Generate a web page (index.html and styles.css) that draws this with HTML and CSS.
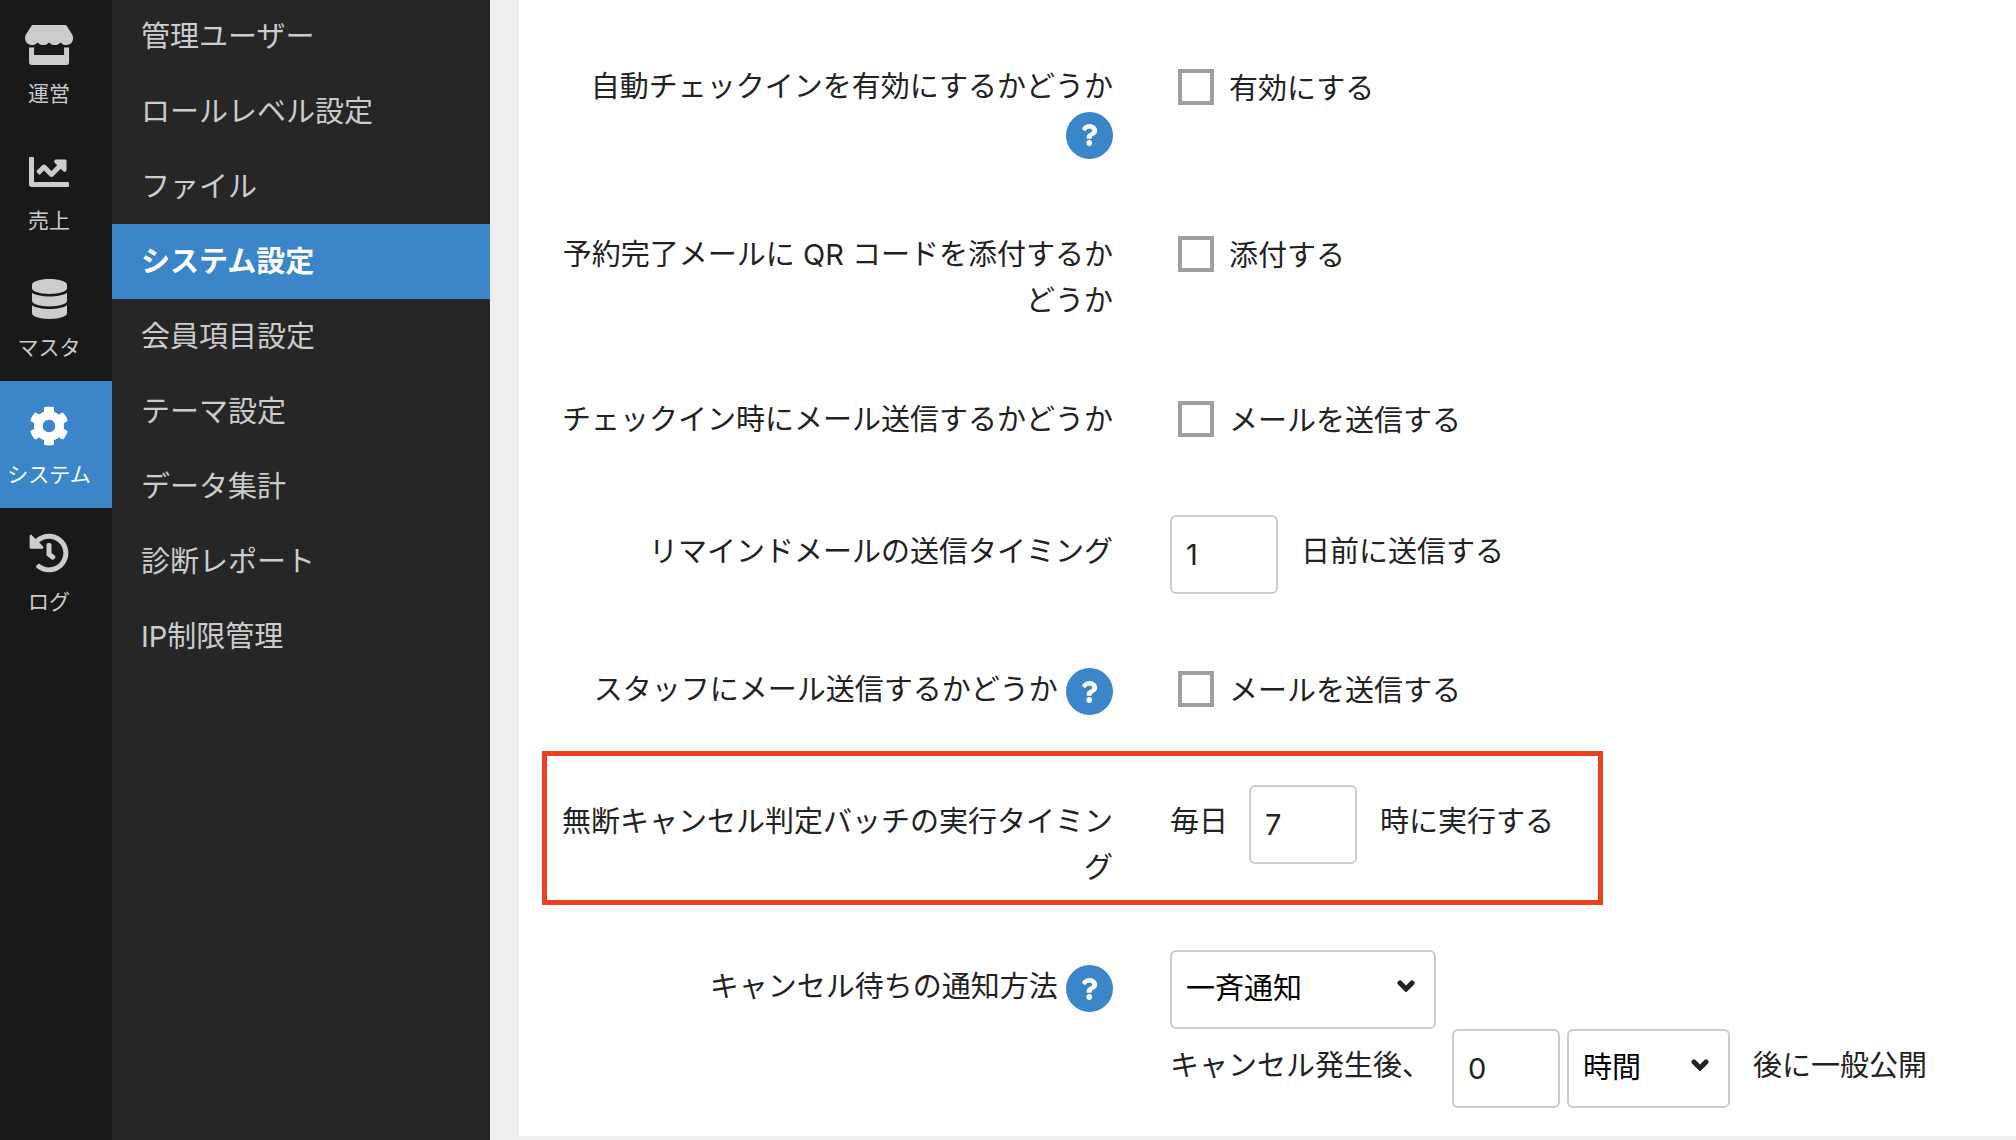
FILE: index.html
```html
<!DOCTYPE html>
<html lang="ja">
<head>
    <meta charset="UTF-8">
    <meta name="viewport" content="width=device-width, initial-scale=1.0">
    <title>システム設定</title>
    <link rel="stylesheet" href="styles.css">
</head>
<body>
    <div class="layout">
        <!-- Main navigation -->
        <nav class="rail" aria-label="メイン">
            <a class="rail-item" href="#">
                <svg class="rail-icon" viewBox="0 0 616 512" aria-hidden="true"><path d="M602 118.6L537.1 15C531.3 5.7 521 0 510 0H106C95 0 84.7 5.7 78.9 15L14 118.6c-33.5 53.5-3.8 127.9 58.8 136.4 4.5.6 9.1.9 13.7.9 29.6 0 55.8-13 73.8-33.1 18 20.1 44.3 33.1 73.8 33.1 29.6 0 55.8-13 73.8-33.1 18 20.1 44.3 33.1 73.8 33.1 29.6 0 55.8-13 73.8-33.1 18.1 20.1 44.3 33.1 73.8 33.1 4.7 0 9.2-.3 13.7-.9 62.8-8.4 92.6-82.8 59-136.4zM529.5 288c-10 0-19.9-1.5-29.5-3.8V384H116v-99.8c-9.6 2.2-19.5 3.8-29.5 3.8-6 0-12.1-.4-18-1.2-5.6-.8-11.1-2.1-16.4-3.6V480c0 17.7 14.3 32 32 32h448c17.7 0 32-14.3 32-32V283.2c-5.4 1.6-10.8 2.9-16.4 3.6-6.1.8-12.1 1.2-18.2 1.2z"/></svg>
                <span>運営</span>
            </a>
            <a class="rail-item" href="#">
                <svg class="rail-icon" viewBox="0 0 512 512" aria-hidden="true"><path d="M496 384H64V80c0-8.84-7.16-16-16-16H16C7.16 64 0 71.16 0 80v336c0 17.67 14.33 32 32 32h464c8.84 0 16-7.16 16-16v-32c0-8.84-7.16-16-16-16zM464 96H345.94c-21.38 0-32.09 25.85-16.97 40.97l32.4 32.4L288 242.75l-73.37-73.37c-12.5-12.5-32.76-12.5-45.25 0l-68.69 68.69c-6.25 6.25-6.25 16.38 0 22.63l22.62 22.62c6.25 6.25 16.38 6.25 22.63 0L192 237.25l73.37 73.37c12.5 12.5 32.76 12.5 45.25 0l96-96 32.4 32.4c15.12 15.12 40.97 4.41 40.97-16.97V112c.01-8.84-7.15-16-15.99-16z"/></svg>
                <span>売上</span>
            </a>
            <a class="rail-item" href="#">
                <svg class="rail-icon" viewBox="0 0 448 512" aria-hidden="true"><path d="M448 73.143v45.714C448 159.143 347.667 192 224 192S0 159.143 0 118.857V73.143C0 32.857 100.333 0 224 0s224 32.857 224 73.143zM448 176v102.857C448 319.143 347.667 352 224 352S0 319.143 0 278.857V176c48.125 33.143 136.208 48.572 224 48.572S399.874 209.143 448 176zm0 160v102.857C448 479.143 347.667 512 224 512S0 479.143 0 438.857V336c48.125 33.143 136.208 48.572 224 48.572S399.874 369.143 448 336z"/></svg>
                <span>マスタ</span>
            </a>
            <a class="rail-item active" href="#">
                <svg class="rail-icon" viewBox="0 0 512 512" aria-hidden="true"><path d="M487.4 315.7l-42.6-24.6c4.3-23.2 4.3-47 0-70.2l42.6-24.6c4.9-2.8 7.1-8.6 5.5-14-11.1-35.6-30-67.8-54.7-94.6-3.8-4.1-10-5.1-14.8-2.3L380.8 110c-17.9-15.4-38.5-27.3-60.8-35.1V25.8c0-5.6-3.9-10.5-9.4-11.7-36.7-8.2-74.3-7.8-109.2 0-5.5 1.2-9.4 6.1-9.4 11.7V75c-22.2 7.9-42.8 19.8-60.8 35.1L88.7 85.5c-4.9-2.8-11-1.9-14.8 2.3-24.7 26.7-43.6 58.9-54.7 94.6-1.7 5.4.6 11.2 5.5 14L67.3 221c-4.3 23.2-4.3 47 0 70.2l-42.6 24.6c-4.9 2.8-7.1 8.6-5.5 14 11.1 35.6 30 67.8 54.7 94.6 3.8 4.1 10 5.1 14.8 2.3l42.6-24.6c17.9 15.4 38.5 27.3 60.8 35.1v49.2c0 5.6 3.9 10.5 9.4 11.7 36.7 8.2 74.3 7.8 109.2 0 5.5-1.2 9.4-6.1 9.4-11.7v-49.2c22.2-7.9 42.8-19.8 60.8-35.1l42.6 24.6c4.9 2.8 11 1.9 14.8-2.3 24.7-26.7 43.6-58.9 54.7-94.6 1.5-5.5-.7-11.3-5.6-14.1zM256 336c-44.1 0-80-35.9-80-80s35.9-80 80-80 80 35.9 80 80-35.9 80-80 80z"/></svg>
                <span>システム</span>
            </a>
            <a class="rail-item" href="#">
                <svg class="rail-icon" viewBox="0 0 512 512" aria-hidden="true"><path d="M504 255.531c.253 136.64-111.18 248.372-247.82 248.468-59.015.042-113.223-20.53-155.822-54.911-11.077-8.94-11.905-25.541-1.839-35.607l11.267-11.267c8.609-8.609 22.353-9.551 31.891-1.984C173.062 425.135 212.781 440 256 440c101.705 0 184-82.311 184-184 0-101.705-82.311-184-184-184-48.814 0-93.149 18.969-126.068 49.932l50.754 50.754c10.08 10.08 2.941 27.314-11.313 27.314H24c-8.837 0-16-7.163-16-16V38.627c0-14.254 17.234-21.393 27.314-11.314l49.372 49.372C129.209 34.136 189.552 8 256 8c136.81 0 247.747 110.78 248 247.531zm-180.912 78.784l9.823-12.63c8.138-10.463 6.253-25.542-4.21-33.679L288 256.349V152c0-13.255-10.745-24-24-24h-16c-13.255 0-24 10.745-24 24v135.651l65.409 50.874c10.463 8.137 25.541 6.253 33.679-4.21z"/></svg>
                <span>ログ</span>
            </a>
        </nav>

        <!-- System menu -->
        <nav class="submenu" aria-label="システム">
            <a href="#">管理ユーザー</a>
            <a href="#">ロールレベル設定</a>
            <a href="#">ファイル</a>
            <a href="#" class="active">システム設定</a>
            <a href="#">会員項目設定</a>
            <a href="#">テーマ設定</a>
            <a href="#">データ集計</a>
            <a href="#">診断レポート</a>
            <a href="#">IP制限管理</a>
        </nav>

        <main class="content">
            <form class="card">
                <div class="form-row">
                    <div class="form-label">
                        <label for="auto-checkin">自動チェックインを有効にするかどうか</label>
                        <button type="button" class="help" aria-label="ヘルプ"><svg viewBox="0 0 384 512" aria-hidden="true"><use href="#question"/></svg></button>
                    </div>
                    <label class="check"><input type="checkbox" id="auto-checkin"><span>有効にする</span></label>
                </div>

                <div class="form-row">
                    <div class="form-label">
                        <label for="attach-qr">予約完了メールに QR コードを添付するかどうか</label>
                    </div>
                    <label class="check"><input type="checkbox" id="attach-qr"><span>添付する</span></label>
                </div>

                <div class="form-row">
                    <div class="form-label">
                        <label for="checkin-mail">チェックイン時にメール送信するかどうか</label>
                    </div>
                    <label class="check"><input type="checkbox" id="checkin-mail"><span>メールを送信する</span></label>
                </div>

                <div class="form-row">
                    <div class="form-label">
                        <label for="remind-days">リマインドメールの送信タイミング</label>
                    </div>
                    <div class="field">
                        <input type="text" inputmode="numeric" id="remind-days" value="1">
                        <span class="suffix">日前に送信する</span>
                    </div>
                </div>

                <div class="form-row">
                    <div class="form-label">
                        <label for="staff-mail">スタッフにメール送信するかどうか</label>
                        <button type="button" class="help" aria-label="ヘルプ"><svg viewBox="0 0 384 512" aria-hidden="true"><use href="#question"/></svg></button>
                    </div>
                    <label class="check"><input type="checkbox" id="staff-mail"><span>メールを送信する</span></label>
                </div>

                <div class="form-row highlight">
                    <div class="form-label">
                        <label for="batch-hour">無断キャンセル判定バッチの実行タイミング</label>
                    </div>
                    <div class="field">
                        <span class="prefix">毎日</span>
                        <input type="text" inputmode="numeric" id="batch-hour" value="7">
                        <span class="suffix">時に実行する</span>
                    </div>
                </div>

                <div class="form-row">
                    <div class="form-label">
                        <label for="notify-method">キャンセル待ちの通知方法</label>
                        <button type="button" class="help" aria-label="ヘルプ"><svg viewBox="0 0 384 512" aria-hidden="true"><use href="#question"/></svg></button>
                    </div>
                    <div>
                        <div class="field">
                            <div class="select wide">
                                <select id="notify-method">
                                    <option>一斉通知</option>
                                </select>
                                <svg viewBox="0 0 18 12" aria-hidden="true"><path d="M3 3l6 6 6-6"/></svg>
                            </div>
                        </div>
                        <div class="field">
                            <label class="prefix" for="open-after">キャンセル発生後、</label>
                            <input type="text" inputmode="numeric" id="open-after" value="0">
                            <div class="select unit">
                                <select aria-label="単位">
                                    <option>時間</option>
                                </select>
                                <svg viewBox="0 0 18 12" aria-hidden="true"><path d="M3 3l6 6 6-6"/></svg>
                            </div>
                            <span class="suffix">後に一般公開</span>
                        </div>
                    </div>
                </div>
            </form>
        </main>
    </div>

    <svg class="symbols" aria-hidden="true">
        <symbol id="question" viewBox="0 0 384 512"><path d="M202.021 0C122.202 0 70.503 32.703 29.914 91.026c-7.363 10.58-5.093 25.086 5.178 32.874l43.138 32.709c10.373 7.865 25.132 6.026 33.253-4.148 25.049-31.381 43.63-49.449 82.757-49.449 30.764 0 68.816 19.799 68.816 49.631 0 22.552-18.617 34.134-48.993 51.164-35.423 19.86-82.299 44.576-82.299 106.405V320c0 13.255 10.745 24 24 24h72.471c13.255 0 24-10.745 24-24v-5.773c0-42.86 125.268-44.645 125.268-160.627C377.504 66.256 286.902 0 202.021 0zM192 373.459c-38.196 0-69.271 31.075-69.271 69.271 0 38.195 31.075 69.27 69.271 69.27s69.271-31.075 69.271-69.27-31.075-69.271-69.271-69.271z"/></symbol>
    </svg>
</body>
</html>
```
FILE: styles.css
```css
*,
*::after {
    margin: 0;
    padding: 0;
    box-sizing: border-box;
}

body {
    font-family: Inter, "Noto Sans CJK JP", sans-serif;
    font-size: 29px;
    line-height: 46px;
    color: #222;
    background: #eee;
}

a {
    color: #ccc;
    text-decoration: none;
}

input,
select {
    font: inherit;
    color: inherit;
}

.layout {
    display: flex;
    align-items: stretch;
    min-height: 100vh;
}

/* Icon navigation */
.rail {
    flex: 0 0 112px;
    background: #191919;
}

.rail-item {
    display: flex;
    flex-direction: column;
    align-items: center;
    gap: 13px;
    height: 127px;
    padding: 25px 14px 0 0;
    font-size: 21px;
    line-height: 32px;
    white-space: nowrap;
}

.rail-icon {
    height: 40px;
    fill: currentColor;
}

.rail-item.active,
.submenu .active {
    color: #fff;
    background: #3b86c8;
}

/* Text navigation */
.submenu {
    flex: 0 0 378px;
    background: #262626;
}

.submenu a {
    display: block;
    height: 75px;
    padding: 1px 0 0 29px;
    line-height: 74px;
}

.submenu a:first-child {
    margin-top: -1px;
}

.submenu .active {
    font-weight: bold;
}

/* Settings form */
.content {
    flex: 1;
    min-width: 0;
    padding-left: 29px;
}

.card {
    padding: 50px 0 28px 30px;
    background: #fff;
}

.form-row {
    position: relative;
    display: grid;
    grid-template-columns: 2fr 3fr;
    column-gap: 57px;
    align-items: start;
    margin-bottom: 59px;
}

.form-row:last-child {
    margin-bottom: 0;
}

.form-label {
    padding-top: 14px;
    text-align: right;
}

.help {
    display: inline-flex;
    align-items: center;
    justify-content: center;
    width: 47px;
    height: 47px;
    border: none;
    border-radius: 50%;
    background: #3b86c8;
    vertical-align: middle;
    cursor: pointer;
}

.help svg {
    height: 22px;
    fill: #fff;
}

.check {
    display: flex;
    align-items: center;
    gap: 15px;
    min-height: 73px;
    padding-left: 8px;
}

.check span {
    padding-top: 4px;
}

.check input {
    appearance: none;
    width: 36px;
    height: 36px;
    border: 4px solid #9f9f9f;
    background: #fff;
}

.check input:checked {
    background: #3b86c8;
}

.field {
    display: flex;
    align-items: center;
}

.field input,
.field select {
    height: 79px;
    padding: 0 14px;
    border: 2px solid #ccc;
    border-radius: 6px;
    background: #fff;
}

.field input {
    width: 108px;
}

.prefix,
.suffix {
    padding-bottom: 5px;
}

.prefix {
    margin-right: 21px;
}

.suffix {
    margin-left: 23px;
}

.select {
    position: relative;
}

.select select {
    display: block;
    appearance: none;
    width: 100%;
    color: #000;
}

.select svg {
    position: absolute;
    top: 30px;
    right: 21px;
    width: 18px;
    height: 12px;
    fill: none;
    stroke: #222;
    stroke-width: 5;
    stroke-linecap: round;
    pointer-events: none;
}

.select.wide {
    width: 266px;
}

.select.unit {
    width: 163px;
    margin-left: 7px;
}

/* Frame drawn over the highlighted setting */
.highlight::after {
    content: "";
    position: absolute;
    top: -34px;
    bottom: -14px;
    left: -7px;
    width: 1061px;
    border: 5px solid #ee4023;
    pointer-events: none;
}

.symbols {
    display: none;
}
```
